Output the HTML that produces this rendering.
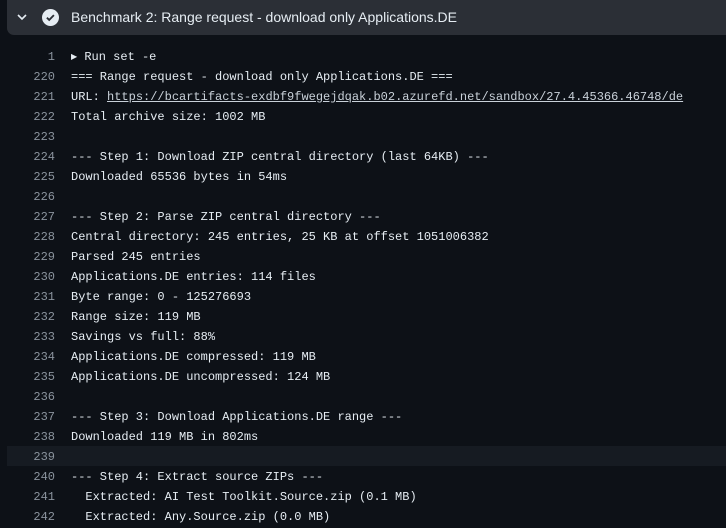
<!DOCTYPE html>
<html><head><meta charset="utf-8"><style>
html,body{margin:0;padding:0;background:#0d1117;width:726px;height:528px;overflow:hidden}
.hdr{position:absolute;left:7px;top:0;width:730px;height:35px;background:#2b2f36;border-radius:0 0 7px 7px}
.hdr .t{position:absolute;left:64px;top:9px;font:14px "Liberation Sans",sans-serif;color:#e6edf3}
.row{position:absolute;left:0;width:726px;height:20px;font:12px/20px "Liberation Mono",monospace;color:#e6edf3;white-space:pre}
.row .n{position:absolute;left:0;width:55px;text-align:right;color:#8b949e}
.row .c{position:absolute;left:71px}
.hl{background:#161b22;left:7px;width:719px}
.hl .n{left:-7px}.hl .c{left:64px}
a{color:#c9d1d9;text-decoration:underline}
.tri{font-size:8px;vertical-align:1px}
</style></head><body>
<div class="hdr">
<svg style="position:absolute;left:9px;top:12px" width="12" height="10" viewBox="0 0 12 10"><path d="M2 3l4 4 4-4" stroke="#e6edf3" stroke-width="1.6" fill="none"/></svg>
<svg style="position:absolute;left:35px;top:9px" width="17" height="17" viewBox="0 0 16 16"><circle cx="8" cy="8" r="8" fill="#e6edf3"/><path d="M4.6 8.2l2.2 2.1 4.4-4.5" stroke="#2b2f36" stroke-width="1.7" fill="none"/></svg>
<div class="t">Benchmark 2: Range request - download only Applications.DE</div>
</div>
<div class="row" style="top:47px"><span class="n">1</span><span class="c"><span class="tri">▶</span> Run set -e</span></div>
<div class="row" style="top:67px"><span class="n">220</span><span class="c">=== Range request - download only Applications.DE ===</span></div>
<div class="row" style="top:87px"><span class="n">221</span><span class="c">URL: <a>https://bcartifacts-exdbf9fwegejdqak.b02.azurefd.net/sandbox/27.4.45366.46748/de</a></span></div>
<div class="row" style="top:107px"><span class="n">222</span><span class="c">Total archive size: 1002 MB</span></div>
<div class="row" style="top:127px"><span class="n">223</span><span class="c"></span></div>
<div class="row" style="top:147px"><span class="n">224</span><span class="c">--- Step 1: Download ZIP central directory (last 64KB) ---</span></div>
<div class="row" style="top:167px"><span class="n">225</span><span class="c">Downloaded 65536 bytes in 54ms</span></div>
<div class="row" style="top:187px"><span class="n">226</span><span class="c"></span></div>
<div class="row" style="top:207px"><span class="n">227</span><span class="c">--- Step 2: Parse ZIP central directory ---</span></div>
<div class="row" style="top:227px"><span class="n">228</span><span class="c">Central directory: 245 entries, 25 KB at offset 1051006382</span></div>
<div class="row" style="top:247px"><span class="n">229</span><span class="c">Parsed 245 entries</span></div>
<div class="row" style="top:267px"><span class="n">230</span><span class="c">Applications.DE entries: 114 files</span></div>
<div class="row" style="top:287px"><span class="n">231</span><span class="c">Byte range: 0 - 125276693</span></div>
<div class="row" style="top:307px"><span class="n">232</span><span class="c">Range size: 119 MB</span></div>
<div class="row" style="top:327px"><span class="n">233</span><span class="c">Savings vs full: 88%</span></div>
<div class="row" style="top:347px"><span class="n">234</span><span class="c">Applications.DE compressed: 119 MB</span></div>
<div class="row" style="top:367px"><span class="n">235</span><span class="c">Applications.DE uncompressed: 124 MB</span></div>
<div class="row" style="top:387px"><span class="n">236</span><span class="c"></span></div>
<div class="row" style="top:407px"><span class="n">237</span><span class="c">--- Step 3: Download Applications.DE range ---</span></div>
<div class="row" style="top:427px"><span class="n">238</span><span class="c">Downloaded 119 MB in 802ms</span></div>
<div class="row hl" style="top:446px;line-height:22px"><span class="n">239</span><span class="c"></span></div>
<div class="row" style="top:467px"><span class="n">240</span><span class="c">--- Step 4: Extract source ZIPs ---</span></div>
<div class="row" style="top:487px"><span class="n">241</span><span class="c">  Extracted: AI Test Toolkit.Source.zip (0.1 MB)</span></div>
<div class="row" style="top:507px"><span class="n">242</span><span class="c">  Extracted: Any.Source.zip (0.0 MB)</span></div>
</body></html>
